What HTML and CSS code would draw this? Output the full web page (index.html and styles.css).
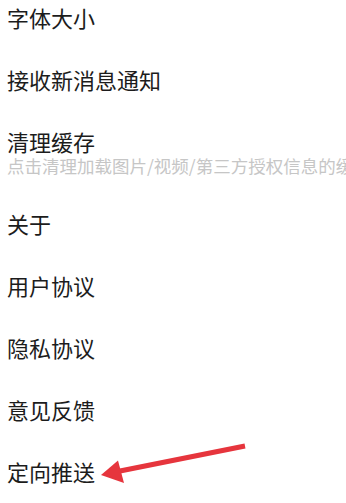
FILE: index.html
```html
<!DOCTYPE html>
<html lang="zh-CN">
<head>
<meta charset="utf-8">
<link rel="stylesheet" href="styles.css">
</head>
<body>
<div class="page">
  <ul class="settings">
    <li class="item"><span class="title">字体大小</span></li>
    <li class="item"><span class="title">接收新消息通知</span></li>
    <li class="item">
      <span class="title">清理缓存</span>
      <span class="desc">点击清理加载图片/视频/第三方授权信息的缓存数据</span>
    </li>
    <li class="item"><span class="title">关于</span></li>
    <li class="item"><span class="title">用户协议</span></li>
    <li class="item"><span class="title">隐私协议</span></li>
    <li class="item"><span class="title">意见反馈</span></li>
    <li class="item"><span class="title">定向推送</span></li>
  </ul>
  <svg class="arrow" width="150" height="50" viewBox="0 0 150 50">
    <line x1="145" y1="6" x2="20" y2="31" stroke="#e6353d" stroke-width="5"/>
    <polygon points="1,35 18,20.5 24,43" fill="#e6353d"/>
  </svg>
</div>
</body>
</html>
```

FILE: styles.css
```css
html, body {
  margin: 0;
  padding: 0;
  background: #ffffff;
  overflow: hidden;
}

.page {
  position: relative;
  width: 346px;
  height: 503px;
  overflow: hidden;
  font-family: "Noto Sans CJK SC", "Noto Sans", sans-serif;
}

.settings {
  list-style: none;
  margin: 0;
  padding: 2px 0 0 7px;
  display: flex;
  flex-direction: column;
  gap: 32px;
}

.item {
  display: flex;
  flex-direction: column;
}

.title {
  font-size: 22px;
  line-height: 30px;
  color: #1c1c1c;
}

.desc {
  font-size: 17.5px;
  line-height: 20px;
  color: #c6c6c6;
  white-space: nowrap;
}

.arrow {
  position: absolute;
  left: 100px;
  top: 440px;
}
```
